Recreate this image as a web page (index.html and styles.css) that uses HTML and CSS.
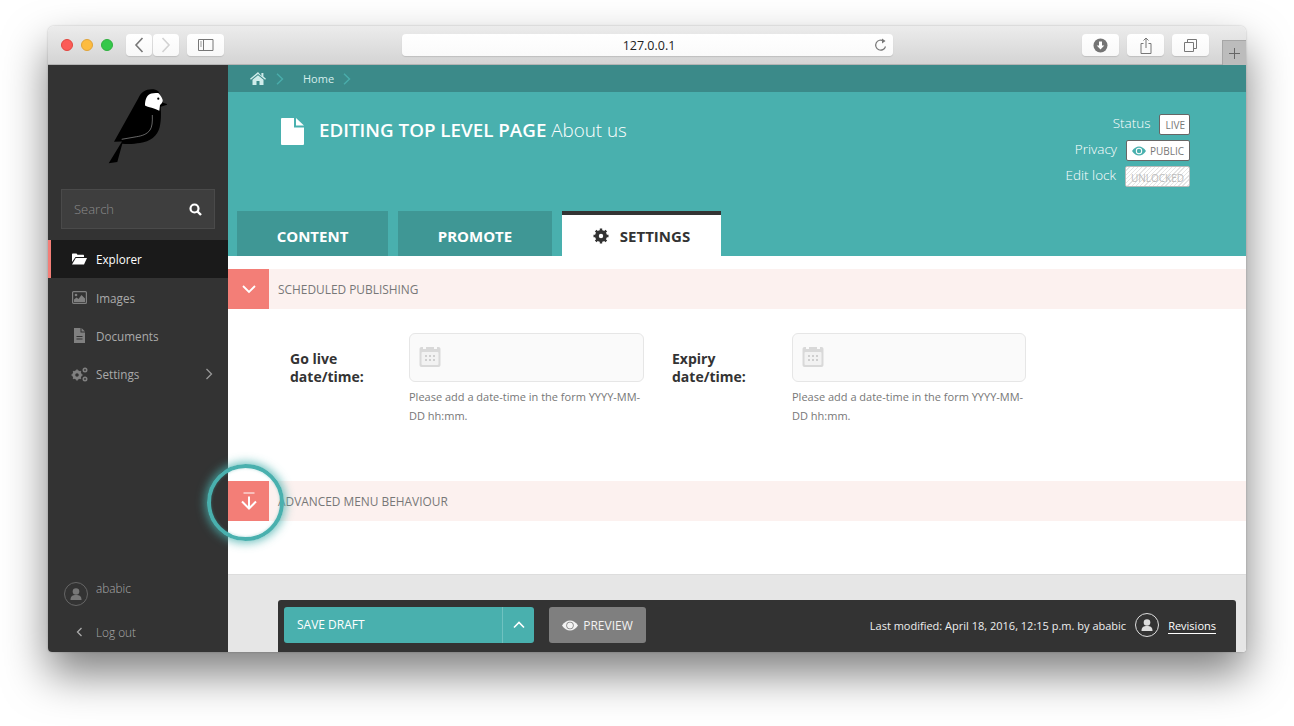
FILE: index.html
```html
<!DOCTYPE html>
<html lang="en">
<head>
<meta charset="utf-8">
<title>Editing About us</title>
<link rel="stylesheet" href="styles.css">
</head>
<body>
<div class="window">
  <header class="toolbar">
    <div class="lights"><span class="light red"></span><span class="light amber"></span><span class="light green"></span></div>
    <div class="btn nav-btn back"><svg width="12" height="18" viewBox="0 0 12 18"><path d="M9.5 2 3 9l6.500 7" fill="none" stroke="#777" stroke-width="1.600"/></svg></div>
    <div class="btn nav-btn fwd"><svg width="12" height="18" viewBox="0 0 12 18"><path d="M2.500 2 9 9l-6.500 7" fill="none" stroke="#d2d2d2" stroke-width="1.600"/></svg></div>
    <div class="btn wide-btn side-btn"><svg width="16" height="12" viewBox="0 0 16 12"><path d="M.5.5h14.500v11H.5zM5.500.5v11" fill="none" stroke="#777"/><path d="M2 3h2M2 5h2M2 7h2" stroke="#999"/></svg></div>
    <div class="url"><span class="url-text">127.0.0.1</span><svg class="reload" width="14" height="14" viewBox="0 0 14 14"><path d="M11.500 8.500A5 5 0 1 1 9.500 3" fill="none" stroke="#777" stroke-width="1.200"/><path d="M8 .5l3.500 2.500L8 5.500z" fill="#777"/></svg></div>
    <div class="right-btns">
      <div class="btn wide-btn"><svg width="15" height="15" viewBox="0 0 15 15"><circle cx="7.500" cy="7.500" r="7" fill="#737373"/><path d="M6 3.500h3v4h2.300l-3.800 4-3.800-4H6z" fill="#fff"/></svg></div>
      <div class="btn wide-btn"><svg width="12" height="17" viewBox="0 0 12 17"><path d="M3.500 6.500H1v10h10v-10H8.500" fill="none" stroke="#777"/><path d="M6 11V1M3.500 3.500 6 1l2.500 2.500" fill="none" stroke="#777"/></svg></div>
      <div class="btn wide-btn"><svg width="13" height="13" viewBox="0 0 13 13"><path d="M3.500 3V.5h9v9H10" fill="none" stroke="#777"/><path d="M.5 3.500h9v9h-9z" fill="none" stroke="#777"/></svg></div>
    </div>
    <div class="new-tab"><svg width="13" height="13" viewBox="0 0 13 13"><path d="M6.500 1v11M1 6.500h11" stroke="#666"/></svg></div>
  </header>

  <div class="app">
    <aside class="sidebar">
      <div class="logo">
        <svg width="62" height="80" viewBox="105 86 62 80">
          <path d="M151.700 89.300c-6 0-11 3-13.400 9L114 141.700l8-.2-13.300 21.800 8.600-1.300 5-18.300c7 1 13-.2 17.700-.7 10-1.500 17.500-6.700 19.700-16 1.300-6 1.500-12 1-20.300l7.300-2.400-5-1.500-4.200-11c-2-2-4.600-2.500-7.100-2.500z" fill="#000"/>
          <path d="M145 105.500c.8 1 6.700 1.800 14.300 5.200l.7-5.700c2-1.500 3-3.400 2.700-5-.8-2.700-2.400-5.200-4.400-7-3.300 0-7 0-8.300 1-3.600 2-5 6-5 11.500z" fill="#fff"/>
          <circle cx="158.300" cy="98.700" r="1.100" fill="#000"/>
          <path d="M152.300 115c.3 7-.2 12-2.300 15-3 4.300-8 5.800-13.300 6.700l-15 2.600" fill="none" stroke="#aaa" stroke-width=".6"/>
        </svg>
      </div>
      <div class="search"><span class="search-label">Search</span><svg width="13" height="13" viewBox="0 0 13 13"><circle cx="5.500" cy="5.500" r="4" fill="none" stroke="#fff" stroke-width="2.200"/><path d="m8.500 8.500 3.500 3.500" stroke="#fff" stroke-width="2.400"/></svg></div>
      <nav class="menu">
        <a class="menu-item active"><svg class="menu-icon" width="15" height="12" viewBox="0 0 15 12"><path d="M0 1.500C0 .8.500.5 1 .5h3.500l1 1.300H11c.6 0 1 .4 1 1V4H3.500L0 9z" fill="#fff"/><path d="M3.800 5H15l-3 6.500H0z" fill="#fff"/></svg><span>Explorer</span></a>
        <a class="menu-item"><svg class="menu-icon" width="15" height="13" viewBox="0 0 15 13"><rect x=".6" y=".6" width="13.800" height="11.800" rx="1" fill="none" stroke="#808080" stroke-width="1.200"/><circle cx="4" cy="4" r="1.300" fill="#808080"/><path d="M2 11V8.500l2.500-2 2 1.500L9.500 4 13 7.500V11z" fill="#808080"/></svg><span>Images</span></a>
        <a class="menu-item"><svg class="menu-icon" width="15" height="15" viewBox="0 0 15 15"><path d="M2 0h6.500v4.500H13V15H2z" fill="#808080"/><path d="M9.500 0 13 3.500H9.500z" fill="#808080"/><path d="M4.500 8.500h6M4.500 11h6" stroke="#333"/></svg><span>Documents</span></a>
        <a class="menu-item has-sub"><svg class="menu-icon cogs" width="17" height="15" viewBox="0 0 17 15"><circle cx="6" cy="8" r="3.500" fill="none" stroke="#808080" stroke-width="2.400"/><path d="M6 2.500v11M.5 8h11M2.200 4.200l7.600 7.600M9.800 4.200l-7.600 7.600" stroke="#808080" stroke-width="1.600"/><circle cx="6" cy="8" r="1.800" fill="#333"/><circle cx="14" cy="3" r="1.700" fill="none" stroke="#808080" stroke-width="1.600"/><circle cx="14" cy="12" r="1.700" fill="none" stroke="#808080" stroke-width="1.600"/></svg><span>Settings</span><svg class="menu-caret" width="8" height="12" viewBox="0 0 8 12"><path d="m1.500 1 5 5-5 5" fill="none" stroke="#999" stroke-width="1.300"/></svg></a>
      </nav>
      <div class="account">
        <div class="acct-row"><svg width="24" height="24" viewBox="0 0 24 24"><circle cx="12" cy="12" r="11.500" fill="none" stroke="#666"/><circle cx="12" cy="9.500" r="3.300" fill="#777"/><path d="M6.500 18c0-4 2-5 5.500-5s5.500 1 5.500 5z" fill="#777"/></svg><span>ababic</span></div>
        <div class="logout"><svg width="7" height="10" viewBox="0 0 7 10"><path d="M5.500 1 1.500 5l4 4" fill="none" stroke="#aaa" stroke-width="1.300"/></svg><span>Log out</span></div>
      </div>
    </aside>

    <main class="main">
      <div class="crumbs">
        <svg class="home" width="16" height="13" viewBox="0 0 16 13"><path d="M8 0 0 6.800l.9 1L8 1.900l7.100 5.900.9-1-2.600-2.200V1h-2v2.900z" fill="#cfecea"/><path d="M8 3.200 2.500 7.800V13h4V9h3v4h4V7.800z" fill="#cfecea"/></svg>
        <svg class="crumb-sep first" width="8" height="12" viewBox="0 0 8 12"><path d="m1 .8 5.500 5.200L1 11.200" fill="none" stroke="#4aadab" stroke-width="1.400"/></svg>
        <span class="crumb">Home</span>
        <svg class="crumb-sep last" width="8" height="12" viewBox="0 0 8 12"><path d="m1 .8 5.500 5.200L1 11.200" fill="none" stroke="#4aadab" stroke-width="1.400"/></svg>
      </div>

      <div class="head">
        <div class="head-top">
          <div class="title">
            <svg width="23" height="27" viewBox="0 0 23 27"><path d="M1 0h12v9.500h10V26a1 1 0 0 1-1 1H1a1 1 0 0 1-1-1V1a1 1 0 0 1 1-1z" fill="#fff"/><path d="M15 0l8 7.500h-8z" fill="#fff"/></svg>
            <h1><strong>EDITING TOP LEVEL PAGE</strong> <span>About us</span></h1>
          </div>
          <div class="meta">
            <div class="meta-row"><span>Status</span><b class="badge">LIVE</b></div>
            <div class="meta-row"><span>Privacy</span><b class="badge public"><svg width="14" height="10" viewBox="0 0 14 10"><path d="M0 5c2-3 4.500-4.500 7-4.500S12 2 14 5c-2 3-4.500 4.500-7 4.500S2 8 0 5z" fill="#49b0ae"/><circle cx="7" cy="5" r="3.200" fill="#fff"/><circle cx="7" cy="5" r="2.200" fill="#49b0ae"/></svg>PUBLIC</b></div>
            <div class="meta-row"><span>Edit lock</span><b class="badge unlocked">UNLOCKED</b></div>
          </div>
        </div>
        <div class="tabs">
          <a class="tab tab-content">CONTENT</a>
          <a class="tab tab-promote">PROMOTE</a>
          <a class="tab tab-settings"><svg width="16" height="16" viewBox="0 0 16 16"><circle cx="8" cy="8" r="4.500" fill="none" stroke="#333" stroke-width="3"/><path d="M8 .5v15M.5 8h15M2.700 2.700l10.600 10.600M13.300 2.700 2.700 13.300" stroke="#333" stroke-width="2.400"/><circle cx="8" cy="8" r="2.200" fill="#fff"/></svg>SETTINGS</a>
        </div>
      </div>

      <section class="panel">
        <div class="bar"><span class="bar-icon"><svg width="14" height="9" viewBox="0 0 14 9"><path d="m1 1 6 6 6-6" fill="none" stroke="#fff" stroke-width="1.800"/></svg></span><span class="bar-title">SCHEDULED PUBLISHING</span></div>
        <div class="fields">
          <div class="field go-live">
            <label class="field-label">Go live date/time:</label>
            <div class="field-body">
              <div class="input"><svg width="22" height="22" viewBox="0 0 22 22"><path d="M2.500 2H4v2h3V2h8v2h3V2h1.500A2 2 0 0 1 21.500 4v16a2 2 0 0 1-2 2h-17a2 2 0 0 1-2-2V4a2 2 0 0 1 2-2z" fill="#d9d9d9"/><rect x="2.500" y="7" width="17" height="13" rx="1" fill="#f2f2f2"/><path d="M6 10h2v2H6zM10 10h2v2h-2zM14 10h2v2h-2zM6 14h2v2H6zM10 14h2v2h-2zM14 14h2v2h-2z" fill="#cfcfcf"/></svg></div>
              <p class="help">Please add a date-time in the form YYYY-MM-DD hh:mm.</p>
            </div>
          </div>
          <div class="field expiry">
            <label class="field-label">Expiry date/time:</label>
            <div class="field-body">
              <div class="input"><svg width="22" height="22" viewBox="0 0 22 22"><path d="M2.500 2H4v2h3V2h8v2h3V2h1.500A2 2 0 0 1 21.500 4v16a2 2 0 0 1-2 2h-17a2 2 0 0 1-2-2V4a2 2 0 0 1 2-2z" fill="#d9d9d9"/><rect x="2.500" y="7" width="17" height="13" rx="1" fill="#f2f2f2"/><path d="M6 10h2v2H6zM10 10h2v2h-2zM14 10h2v2h-2zM6 14h2v2H6zM10 14h2v2h-2zM14 14h2v2h-2z" fill="#cfcfcf"/></svg></div>
              <p class="help">Please add a date-time in the form YYYY-MM-DD hh:mm.</p>
            </div>
          </div>
        </div>
        <div class="bar"><span class="bar-icon"><svg width="18" height="18" viewBox="0 0 18 18"><path d="M3.500 1h11" stroke="#fff" stroke-width="1"/><path d="M9 4.500V16.500M2 9.500l7 7 7-7" fill="none" stroke="#fff" stroke-width="2"/></svg></span><span class="bar-title">ADVANCED MENU BEHAVIOUR</span></div>
      </section>

      <div class="foot-area">
        <div class="footer">
          <div class="save"><span class="save-label">SAVE DRAFT</span><span class="save-caret"><svg width="12" height="8" viewBox="0 0 12 8"><path d="m1 6.500 5-5 5 5" fill="none" stroke="#fff" stroke-width="1.600"/></svg></span></div>
          <div class="preview"><svg width="16" height="11" viewBox="0 0 16 11"><path d="M0 5.500C2.300 2 5 .5 8 .5s5.700 1.500 8 5c-2.300 3.500-5 5-8 5s-5.700-1.500-8-5z" fill="#f2f2f2"/><circle cx="8" cy="5.500" r="3.700" fill="#7f7f7f"/><circle cx="8" cy="5.500" r="2.900" fill="#f2f2f2"/></svg><span>PREVIEW</span></div>
          <div class="mod">
            <span class="mod-text">Last modified: April 18, 2016, 12:15 p.m. by ababic</span>
            <svg width="24" height="24" viewBox="0 0 24 24"><circle cx="12" cy="12" r="11.500" fill="none" stroke="#ddd"/><circle cx="12" cy="9.500" r="3.300" fill="#ddd"/><path d="M6.500 18c0-4 2-5 5.500-5s5.500 1 5.500 5z" fill="#ddd"/></svg>
            <a class="revisions">Revisions</a>
          </div>
        </div>
      </div>
    </main>
  </div>

  <div class="spot"></div>
</div>
</body>
</html>
```

FILE: styles.css
```css
* { box-sizing: border-box; }
html, body { margin: 0; height: 100%; background: #fff; overflow: hidden; }
body { font-family: "Open Sans", "Liberation Sans", sans-serif; color: #333; }
svg { display: block; flex: none; }
h1, p { margin: 0; }

.window {
  position: relative;
  width: 1198px;
  height: 626px;
  margin: 26px 0 0 48px;
  border-radius: 6px 6px 4px 4px;
  box-shadow: 0 22px 44px rgba(0,0,0,.5), 0 0 2px rgba(0,0,0,.25);
  display: flex;
  flex-direction: column;
}

/* Browser chrome */
.toolbar {
  height: 39px;
  flex: none;
  display: flex;
  align-items: flex-start;
  padding: 8px 0 0 13px;
  background: linear-gradient(#ececec, #d4d4d4);
  border-bottom: 1px solid #b4b4b4;
  border-radius: 6px 6px 0 0;
  position: relative;
}
.lights { display: flex; gap: 8px; margin-top: 5px; }
.light { width: 12px; height: 12px; border-radius: 50%; }
.red { background: #fc5b57; border: 1px solid #e2463f; }
.amber { background: #fdbc40; border: 1px solid #e0a43a; }
.green { background: #34c84a; border: 1px solid #2fb03f; }
.btn {
  height: 22px;
  background: linear-gradient(#fff, #f8f8f8);
  border-radius: 4px;
  box-shadow: 0 1px 1px rgba(0,0,0,.12);
  display: flex;
  align-items: center;
  justify-content: center;
}
.nav-btn { width: 26px; }
.back { margin-left: 13px; }
.fwd { margin-left: 1px; }
.wide-btn { width: 37px; }
.side-btn { margin-left: 8px; }
.url {
  width: 491px;
  height: 22px;
  margin-left: 178px;
  background: linear-gradient(#fff, #fafafa);
  border-radius: 4px;
  box-shadow: 0 1px 1px rgba(0,0,0,.12);
  display: flex;
  align-items: center;
  justify-content: center;
  position: relative;
  font-size: 12.500px;
  color: #222;
}
.url-text { margin-left: 3px; }
.reload { position: absolute; right: 5px; top: 4px; }
.right-btns { display: flex; gap: 8px; margin-left: 189px; }
.new-tab {
  width: 24px;
  height: 25px;
  margin: 6px 0 0 13px;
  background: #bcbcbc;
  border: 1px solid #a6a6a6;
  border-width: 1px 0 0 1px;
  display: flex;
  align-items: center;
  justify-content: center;
}

.app { flex: 1; display: flex; min-height: 0; }

/* Sidebar */
.sidebar {
  width: 180px;
  flex: none;
  background: #333;
  border-radius: 0 0 0 4px;
  display: flex;
  flex-direction: column;
}
.logo { height: 124px; padding: 21px 0 0 57px; }
.search {
  width: 154px;
  height: 40px;
  margin-left: 13px;
  padding: 0 12px 0 12px;
  background: #3e3e3e;
  border: 1px solid #4a4a4a;
  display: flex;
  align-items: center;
  justify-content: space-between;
  font-size: 13px;
  font-weight: 300;
  color: #8c8c8c;
}
.menu { margin-top: 11px; }
.menu-item {
  height: 38.400px;
  display: flex;
  align-items: center;
  padding-left: 24px;
  font-size: 11.700px;
  color: #aaa;
  position: relative;
}
.menu-item span { margin-left: 9px; }
.menu-icon { width: 15px; }
.cogs { width: 17px; margin-left: -1px; }
.menu-item .cogs + span { margin-left: 8px; }
.active { background: #1a1a1a; color: #fff; border-left: 3px solid #f37e77; padding-left: 21px; }
.menu-caret { margin-left: auto; margin-right: 15px; }
.account { margin-top: auto; padding: 0 0 11px 16px; font-size: 11.800px; font-weight: 300; color: #aaa; }
.acct-row { display: flex; align-items: center; gap: 8px; }
.acct-row span { margin-top: -12px; }
.logout { display: flex; align-items: center; margin-top: 17px; padding-left: 12px; height: 18px; }
.logout span { margin-left: 13px; }

/* Main */
.main { flex: 1; min-width: 0; display: flex; flex-direction: column; background: #fff; border-radius: 0 0 4px 0; }
.crumbs {
  height: 27px;
  flex: none;
  background: #3b8a89;
  display: flex;
  align-items: center;
  padding-left: 22px;
  font-size: 11px;
  color: #d6eeed;
}
.crumb-sep.first { margin-left: 10px; }
.crumb { margin-left: 19px; }
.crumb-sep.last { margin-left: 9px; }

.head { height: 164px; flex: none; background: #49b0ae; display: flex; flex-direction: column; }
.head-top { height: 119px; display: flex; justify-content: space-between; padding: 22px 56px 0 53px; }
.title { display: flex; gap: 15px; align-items: flex-start; color: #fff; }
.title svg { margin-top: 4px; }
h1 { font-size: 18.800px; font-weight: 300; line-height: 32px; white-space: pre-wrap; }
h1 strong { font-weight: 600; }
.meta { display: flex; flex-direction: column; gap: 5px; color: #fff; font-size: 13.500px; font-weight: 300; }
.meta-row { height: 21px; display: flex; align-items: center; justify-content: flex-end; gap: 9px; }
.meta-row span { margin-top: -4px; }
.badge {
  height: 21px;
  padding: 0 4px 0 5px;
  background: #fff;
  border: 1px solid #666;
  border-radius: 2px;
  font-size: 10px;
  font-weight: 400;
  color: #777;
  display: flex;
  align-items: center;
  gap: 4px;
}
.public { width: 64px; }
.unlocked {
  width: 65px;
  gap: 0;
  padding-top: 2px;
  border-color: #bbb;
  color: #bbb;
  background: repeating-linear-gradient(135deg, #fff 0 2px, #e4e4e4 2px 3px);
}
.tabs { display: flex; gap: 10px; padding-left: 9px; flex: 1; }
.tab {
  display: flex;
  align-items: center;
  justify-content: center;
  padding-top: 4px;
  font-size: 15px;
  font-weight: 700;
  color: #fff;
  background: #3f9795;
}
.tab-content { width: 151px; }
.tab-promote { width: 154px; }
.tab-settings { width: 159px; padding-top: 0; background: #fff; color: #333; border-top: 4px solid #333; gap: 11px; }

/* Panels */
.panel { height: 319px; flex: none; padding-top: 13px; border-bottom: 1px solid #ddd; background: #fff; }
.bar { height: 40px; background: #fcf1ef; display: flex; align-items: center; }
.bar-icon { width: 41px; height: 40px; background: #f37e77; display: flex; align-items: center; justify-content: center; }
.bar-title { margin-left: 9px; font-size: 11.900px; color: #777; white-space: nowrap; }
.fields { height: 172px; padding: 24px 0 0 62px; display: flex; gap: 28px; }
.field { display: flex; }
.field-label { font-size: 14px; font-weight: 700; line-height: 18px; padding-top: 17px; color: #333; width: 78px; }
.go-live .field-label { margin-right: 41px; }
.expiry .field-label { margin-right: 42px; }
.go-live .field-body { width: 235px; }
.expiry .field-body { width: 234px; }
.input {
  height: 49px;
  background: #fafafa;
  border: 1px solid #e6e6e6;
  border-radius: 6px;
  display: flex;
  align-items: center;
  padding: 0 0 3px 9px;
}
.help { margin-top: 5px; font-size: 11px; line-height: 19px; color: #777; }

/* Footer */
.foot-area { flex: 1; background: #e6e6e6; padding: 25px 10px 0 50px; display: flex; align-items: stretch; border-radius: 0 0 4px 0; }
.footer {
  flex: 1;
  height: 52px;
  background: #333;
  border-radius: 3px 3px 0 0;
  padding: 7px 20px 0 6px;
  display: flex;
  align-items: flex-start;
  color: #fff;
  font-size: 12px;
}
.save { width: 250px; height: 36px; background: #49b0ae; border-radius: 3px; display: flex; }
.save-label { flex: 1; padding-left: 13px; line-height: 35px; font-weight: 400; }
.save-caret { width: 32px; border-left: 1px solid #6fc2c0; display: flex; align-items: center; justify-content: center; }
.preview { width: 97px; height: 36px; margin-left: 15px; background: #7f7f7f; border-radius: 3px; display: flex; align-items: center; justify-content: center; gap: 5px; color: #f2f2f2; }
.mod { margin-left: auto; height: 36px; display: flex; align-items: center; font-size: 11px; color: #eee; }
.mod svg { margin-left: 9px; }
.revisions { margin-left: 9px; color: #fff; border-bottom: 1px solid #fff; line-height: 15px; padding-top: 2px; }

/* Highlight ring over the page */
.spot {
  position: absolute;
  left: 159px;
  top: 438px;
  width: 77px;
  height: 77px;
  border-radius: 50%;
  border: 4px solid #49b0ae;
  box-shadow: 0 0 10px 2px rgba(73,176,174,.8), inset 0 0 3px rgba(73,176,174,.4);
  pointer-events: none;
}
```
